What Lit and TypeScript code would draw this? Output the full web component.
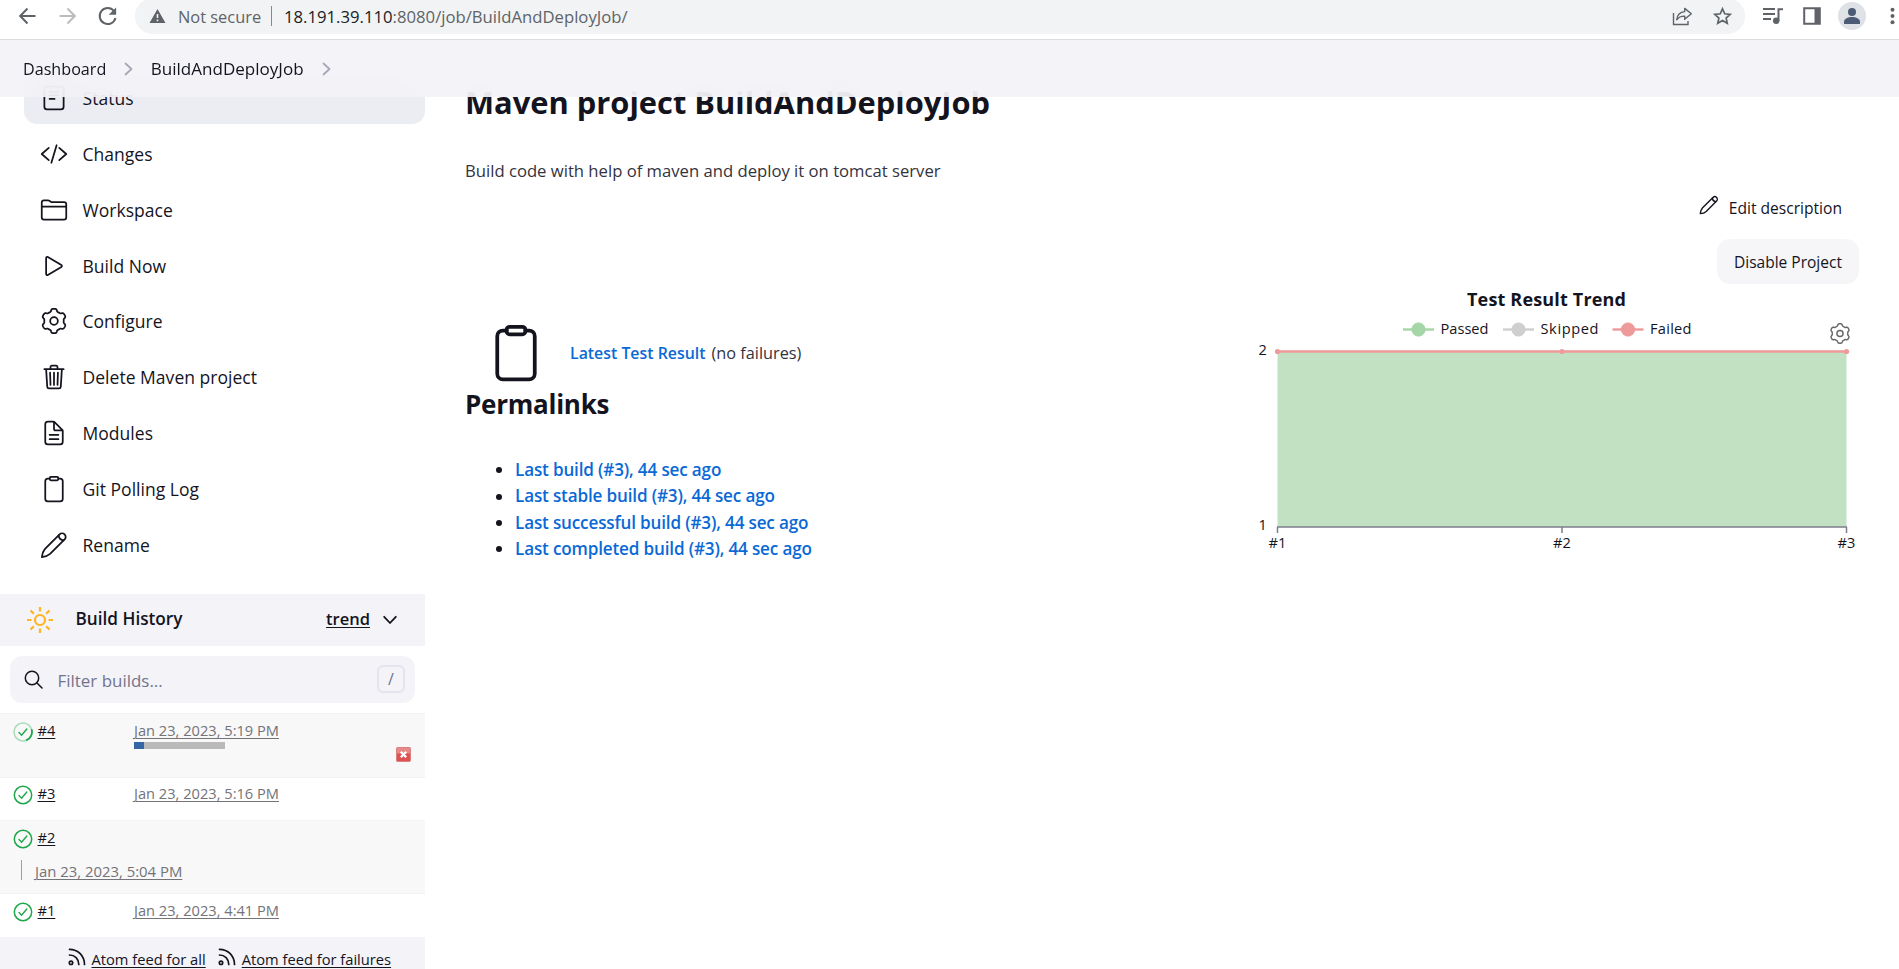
import { LitElement, html, svg, css } from "lit";
import { customElement } from "lit/decorators.js";
import { classMap } from "lit/directives/class-map.js";
import { styleMap } from "lit/directives/style-map.js";

/** Six-lobed cog outline centred on the origin, radius about 12. */
const cogPath = (() => {
  const points: string[] = [];
  for (let i = 0; i < 144; i++) {
    const a = (i / 144) * Math.PI * 2;
    const r = 10.55 + 1.25 * Math.tanh(-2.2 * Math.cos(6 * a));
    points.push(`${(r * Math.cos(a)).toFixed(2)} ${(r * Math.sin(a)).toFixed(2)}`);
  }
  return `M${points.join("L")}Z`;
})();

const clipboard = svg`
  <path d="M336 64h32a48 48 0 0148 48v320a48 48 0 01-48 48H144a48 48 0 01-48-48V112a48 48 0 0148-48h32" />
  <rect x="176" y="32" width="160" height="64" rx="26" />`;

const pencil = svg`
  <path d="M358 62L92 328C62 362 40 420 34 478c58-6 116-28 150-58L450 154c26-26 26-66 0-92s-66-26-92 0z" />
  <path d="M342 80c4 52 38 86 90 90" />`;

const glyphs = {
  status: svg`<rect x="80" y="48" width="352" height="416" rx="48" /><path d="M176 144h160M176 208h160M176 272h90" />`,
  changes: svg`<path d="M160 368L32 256l128-112M352 368l128-112-128-112M304 96l-96 320" />`,
  workspace: svg`<path d="M440 432H72a40 40 0 01-40-40V120a40 40 0 0140-40h75.89a40 40 0 0122.19 6.72l27.84 18.56a40 40 0 0022.19 6.72H440a40 40 0 0140 40v240a40 40 0 01-40 40zM32 192h448" />`,
  build: svg`<path d="M112 111v290c0 17.44 17 28.52 31 20.16l247.9-148.37c12.12-7.25 12.12-26.33 0-33.58L143 90.84c-14-8.36-31 2.72-31 20.16z" />`,
  configure: svg`<g transform="translate(256 256) scale(19)"><path d=${cogPath} stroke-width="1.7" /><circle r="3.7" stroke-width="1.7" /></g>`,
  delete: svg`<path d="M112 112l20 320c.95 18.49 14.4 32 32 32h184c17.67 0 30.87-13.51 32-32l20-320M80 112h352M192 112V72a23.93 23.93 0 0124-24h80a23.93 23.93 0 0124 24v40M256 176v224M184 176l8 224M328 176l-8 224" />`,
  modules: svg`<path d="M416 221.25V416a48 48 0 01-48 48H144a48 48 0 01-48-48V96a48 48 0 0148-48h98.75a32 32 0 0122.62 9.37l141.26 141.26a32 32 0 019.37 22.62z" /><path d="M256 56v120a32 32 0 0032 32h120M176 288h160M176 368h160" />`,
  log: clipboard,
  rename: pencil,
};

const menu: { icon: keyof typeof glyphs; label: string; active?: boolean }[] = [
  { icon: "status", label: "Status", active: true },
  { icon: "changes", label: "Changes" },
  { icon: "workspace", label: "Workspace" },
  { icon: "build", label: "Build Now" },
  { icon: "configure", label: "Configure" },
  { icon: "delete", label: "Delete Maven project" },
  { icon: "modules", label: "Modules" },
  { icon: "log", label: "Git Polling Log" },
  { icon: "rename", label: "Rename" },
];

const builds: { id: number; date: string; progress?: number; wrap?: boolean; compact?: boolean }[] = [
  { id: 4, date: "Jan 23, 2023, 5:19 PM", progress: 11 },
  { id: 3, date: "Jan 23, 2023, 5:16 PM", compact: true },
  { id: 2, date: "Jan 23, 2023, 5:04 PM", wrap: true },
  { id: 1, date: "Jan 23, 2023, 4:41 PM" },
];

const permalinks = ["Last build", "Last stable build", "Last successful build", "Last completed build"];

@customElement("browser-bar")
export class BrowserBar extends LitElement {
  static styles = css`
    :host { display: block; height: 39px; background: #fff; border-bottom: 1px solid #dadce0; color: #5f6368; }
    .bar { display: flex; align-items: center; height: 32px; padding-left: 16px; }
    svg { display: block; flex: none; fill: none; stroke: #5f6368; stroke-width: 2; }
    .fill { fill: #5f6368; stroke: none; }
    .back { margin-right: 16px; }
    .forward { margin-right: 16px; stroke: #babcbe; }
    .pill { flex: 1; display: flex; align-items: center; height: 36px; margin: 0 18px 0 15px; border-radius: 18px; background: #f1f3f4; }
    .warning { margin: 0 12px 0 14px; }
    .label { width: 83px; font-size: 16.4px; white-space: nowrap; }
    .divider { width: 1px; height: 20px; margin: 0 12px 0 10px; background: #85888c; }
    .url { flex: 1; font-size: 16.7px; white-space: nowrap; }
    .host { color: #202124; }
    .share { margin-right: 19px; }
    .star { margin-right: 12px; }
    .music { margin-right: 20px; }
    .panel { margin-right: 17px; }
    .avatar { display: block; margin-right: 24px; }
    .dots { margin-right: 4px; }
  `;
  render() {
    return html`
      <div class="bar">
        <svg class="back" width="24" height="24" viewBox="0 0 24 24"><path d="M19.5 12H4.5M11.5 4.5L4.2 12l7.3 7.5" /></svg>
        <svg class="forward" width="24" height="24" viewBox="0 0 24 24"><path d="M3.5 12h14.5M11.5 4.5l7.3 7.5-7.3 7.5" /></svg>
        <svg width="24" height="24" viewBox="0 0 24 24"><path d="M18 7A8 8 0 1 0 19.5 14" /><path class="fill" d="M20.1 3.5v7.2h-7.4z" /></svg>
        <div class="pill">
          <svg class="warning" width="17" height="16" viewBox="0 0 17 16"><path class="fill" fill-rule="evenodd" d="M8.5 1L16.5 15H.5zM7.7 6v4h1.6V6zM7.7 11.5v1.7h1.6v-1.7z" /></svg>
          <span class="label">Not secure</span>
          <span class="divider"></span>
          <span class="url"><span class="host">18.191.39.110</span>:8080/job/BuildAndDeployJob/</span>
          <svg class="share" width="21" height="20" viewBox="0 0 21 20"><path stroke-width="1.4" d="M1.5 7v11.5H16V15" /><path stroke-width="1.4" stroke-linejoin="round" d="M12.7 2.4l6.6 5.4-6.6 5.4v-3.1c-3.6-.1-6.2 1.2-8 3.7.5-4.6 3.2-7.8 8-8.2z" /></svg>
          <svg class="star" width="21" height="20" viewBox="0 0 21 20"><path stroke-width="1.7" d="M10.5 2.8l2.25 5 5.4.55-4.05 3.65 1.15 5.3-4.75-2.75-4.75 2.75 1.15-5.3L2.85 8.35l5.4-.55z" /></svg>
        </div>
        <svg class="music" width="20" height="18" viewBox="0 0 20 18"><path d="M0 2h12M0 7h12M0 12h8M15.5 14V2.2M14.5 2.2H20" /><circle class="fill" cx="13.2" cy="13.8" r="3.2" /></svg>
        <svg class="panel" width="18" height="18" viewBox="0 0 18 18"><path d="M1.2 1.2h15.6v15.6H1.2z" /><path class="fill" d="M11.5 1H17v16h-5.5z" /></svg>
        <svg class="avatar" width="28" height="28" viewBox="0 0 28 28"><circle cx="14" cy="14" r="14" fill="#dee1e6" stroke="none" /><g fill="#4d5b76" stroke="none"><circle cx="14" cy="10" r="4" /><path d="M6 22v-2.2c0-3 4-4.8 8-4.8s8 1.8 8 4.8V22z" /></g></svg>
        <svg class="dots" width="5" height="18" viewBox="0 0 5 18"><g class="fill"><circle cx="2.5" cy="2.7" r="2" /><circle cx="2.5" cy="9" r="2" /><circle cx="2.5" cy="15.3" r="2" /></g></svg>
      </div>
    `;
  }
}

@customElement("side-panel")
export class SidePanel extends LitElement {
  static styles = css`
    :host { display: block; width: 425px; flex: none; font-weight: 500; color: #14141f; }
    svg { display: block; flex: none; fill: none; }
    .menu { display: flex; flex-direction: column; gap: 3.85px; padding-left: 24px; }
    .item { display: flex; align-items: center; gap: 14.5px; height: 52px; padding-left: 16px; border-radius: 13px; font-size: 17.5px; letter-spacing: 0.03px; }
    .active { background: #ecedf3; }
    .item svg, .rss { stroke: #14141f; stroke-width: 32; stroke-linecap: round; stroke-linejoin: round; }
    .history { display: flex; align-items: center; height: 52px; margin-top: 23.2px; padding: 0 28px 0 26px; background: #f3f3f8; font-size: 17.2px; font-weight: 600; }
    .history span { flex: 1; padding: 0 0 3px 21.5px; }
    .trend { font-size: 16.5px; text-decoration: underline; text-underline-offset: 2px; padding-bottom: 3px; margin-right: 13px; }
    .filter { display: flex; align-items: center; box-sizing: border-box; height: 47px; margin: 10px; padding: 0 10px 0 14px; border-radius: 12px; background: #f3f3f8; color: #73738c; font-size: 16.95px; }
    .filter span { flex: 1; padding: 2px 0 0 14.5px; }
    .key { display: flex; align-items: center; justify-content: center; box-sizing: border-box; width: 28px; height: 28px; border: 2px solid #e4e3ee; border-radius: 6px; font-style: normal; font-size: 16px; margin-top: -1px; }
    .build { box-sizing: border-box; height: 44px; padding: 4px 14px 0 13px; border-top: 1px solid #f3f3f3; font-size: 14.65px; }
    .shaded { background: #f8f8f8; }
    .running { height: 64px; }
    .compact { height: 43px; padding-top: 3px; }
    .wrapped { height: 73px; }
    .line { display: flex; align-items: center; height: 24px; }
    .line svg { margin-top: 4px; }
    .num { width: 96.5px; padding-left: 4.5px; }
    .num span, .date, .feed span { text-decoration: underline; text-underline-offset: 2px; text-decoration-thickness: 1px; }
    .date { color: #737378; font-weight: 400; }
    .job { display: flex; padding-left: 121px; }
    .progress { width: 91px; height: 7px; background: #bababa; }
    .done { height: 7px; background: #3465a4; }
    .stop { margin: 5px 0 0 auto; }
    .below { margin: 11px 0 0 7.5px; height: 20px; padding-left: 13.5px; border-left: 1px solid #9a9fae; line-height: 22px; font-size: 14.88px; }
    .feeds { display: flex; gap: 12px; height: 32px; padding-left: 67.5px; background: #f3f3f8; font-size: 14.7px; }
    .feed { display: flex; gap: 6px; line-height: 20px; padding-top: 12px; height: 20px; }
    .rss { margin-top: -1px; stroke-width: 1.7; }
    .feed span { white-space: nowrap; line-height: 20px; }
  `;

  private statusIcon(running: boolean) {
    return html`<svg width="20" height="20" viewBox="0 0 20 20">
      ${running
        ? svg`<circle cx="10" cy="10" r="9" stroke="#a9dcb9" stroke-width="1.5" /><path d="M18.5 7.2A9 9 0 0 1 13.2 18.4" stroke="#1ea64b" stroke-width="1.8" />`
        : svg`<circle cx="10" cy="10" r="8.7" stroke="#1ea64b" stroke-width="1.5" />`}
      <path d="M6 10.6l2.6 2.6 5.2-6.2" stroke="#1ea64b" stroke-width="1.4" stroke-linecap="round" />
    </svg>`;
  }

  private feed(label: string) {
    return html`<div class="feed">
      <svg class="rss" width="18" height="18" viewBox="0 0 18 18">
        <path d="M1.5 1.3C10 1.3 16.5 8 16.5 16.5M1.5 7c5.3 0 9.3 4 9.3 9.5" /><circle cx="3" cy="14.8" r="1.7" />
      </svg><span>${label}</span></div>`;
  }

  render() {
    return html`
      <nav class="menu">
        ${menu.map((m) => html`<div class=${classMap({ item: true, active: !!m.active })}>
          <svg width="28" height="28" viewBox="0 0 512 512">${glyphs[m.icon]}</svg>${m.label}</div>`)}
      </nav>
      <div class="history">
        <svg width="28" height="28" viewBox="0 0 28 28" stroke="#ffb420" stroke-width="2.2">
          <circle cx="14" cy="14" r="5" />
          <path d="M14 1v4.5M14 22.5V27M1 14h4.5M22.5 14H27M4.5 4.5l3.3 3.3M20.2 20.2l3.3 3.3M4.5 23.5l3.3-3.3M20.2 7.8l3.3-3.3" />
        </svg>
        <span>Build History</span>
        <div class="trend">trend</div>
        <svg width="14" height="10" viewBox="0 0 14 10" stroke="#14141f" stroke-width="1.8" stroke-linecap="round" stroke-linejoin="round"><path d="M1.2 1.8L7 8l5.8-6.2" /></svg>
      </div>
      <div class="filter">
        <svg width="19" height="19" viewBox="0 0 19 19" stroke="#14141f" stroke-width="1.5" stroke-linecap="round"><circle cx="8" cy="8" r="6.7" /><path d="M13 13l5 5" /></svg>
        <span>Filter builds...</span><i class="key">/</i>
      </div>
      ${builds.map((b, i) => html`
        <div class=${classMap({ build: true, shaded: i % 2 === 0, running: b.progress !== undefined, compact: !!b.compact, wrapped: !!b.wrap })}>
          <div class="line">
            ${this.statusIcon(b.progress !== undefined)}
            <div class="num"><span>#${b.id}</span></div>
            ${b.wrap ? "" : html`<span class="date">${b.date}</span>`}
          </div>
          ${b.wrap ? html`<div class="below"><span class="date">${b.date}</span></div>` : ""}
          ${b.progress !== undefined ? html`<div class="job">
            <div class="progress"><div class="done" style=${styleMap({ width: `${b.progress}%` })}></div></div>
            <svg class="stop" width="15" height="15" viewBox="0 0 15 15">
              <rect x=".5" y=".5" width="14" height="14" rx="1" fill="#dd5252" stroke="#d98080" /><path d="M1 1h13v5.5H1z" fill="#e88989" />
              <path d="M4.8 4.8l5.4 5.4M10.2 4.8l-5.4 5.4" stroke="#fff" stroke-width="2.3" />
            </svg></div>` : ""}
        </div>`)}
      <div class="feeds">${this.feed("Atom feed for all")}${this.feed("Atom feed for failures")}</div>
    `;
  }
}

@customElement("trend-chart")
export class TrendChart extends LitElement {
  static styles = css`
    :host { display: block; }
    svg { display: block; fill: none; }
    text { fill: #14141f; font-size: 14.6px; }
    .title { font-size: 18px; font-weight: 700; }
    .axis { stroke: #7d7f8c; stroke-width: 1.5; }
    .failed { stroke: #ef9a9a; fill: #ef9a9a; }
    .passed { stroke: #a5d6a7; fill: #a5d6a7; }
    .skipped { stroke: #cfcfcf; fill: #cfcfcf; }
    .cog { stroke: #666; stroke-width: 1.7; }
  `;
  private legend = [
    { name: "Passed", cls: "passed", x: 1403, w: 48 },
    { name: "Skipped", cls: "skipped", x: 1503, w: 58 },
    { name: "Failed", cls: "failed", x: 1612.5, w: 41.5 },
  ];
  private runs = [1277.5, 1562, 1846.5];
  render() {
    return html`<svg width="619" height="280" viewBox="1240 284 619 280">
      <text class="title" x="1467" y="306" textLength="159">Test Result Trend</text>
      ${this.legend.map((l) => svg`<g class=${l.cls}><path d="M${l.x} 329.5h31" stroke-width="2.4" /><circle cx=${l.x + 15.5} cy="329.5" r="6.6" /></g>
        <text x=${l.x + 37.5} y="334" textLength=${l.w}>${l.name}</text>`)}
      <g class="cog" transform="translate(1840 333.5) scale(.83)"><path d=${cogPath} /><circle r="3.7" /></g>
      <path d="M1277.5 351.5h569V527h-569z" fill="#c2e1c2" />
      <path class="axis" d="M1277 527h570M1277.5 527v6M1562 527v6M1846.5 527v6" />
      <path d="M1277.5 351.5h569" stroke="#ef9a9a" stroke-width="2.6" />
      ${this.runs.map((x, i) => svg`<circle class="failed" stroke-width="0" cx=${x} cy="351.5" r="2.6" /><text x=${x} y="547.5" text-anchor="middle">#${i + 1}</text>`)}
      <text x="1258.5" y="355">2</text><text x="1258.5" y="530">1</text>
    </svg>`;
  }
}

@customElement("app-root")
export class AppRoot extends LitElement {
  static styles = css`
    :host { display: block; height: 969px; overflow: hidden; background: #fff; color: #14141f; font-family: "Open Sans", "Noto Sans", sans-serif; }
    svg { display: block; flex: none; fill: none; stroke: #14141f; stroke-width: 32; stroke-linecap: round; stroke-linejoin: round; }
    .crumbs { position: relative; z-index: 1; display: flex; align-items: center; height: 57px; padding-left: 23px; background: rgba(243, 243, 247, 0.88); backdrop-filter: blur(15px); font-weight: 500; font-size: 16.15px; }
    .crumbs svg { stroke: #a8a6b8; margin: 0 17.5px 0 18px; stroke-width: 1.8; }
    .job { font-size: 17.05px; }
    .page { display: flex; margin-top: -25px; }
    main { flex: 1; padding: 8px 40px 0 40px; }
    h1 { margin: 0; font-size: 30.85px; line-height: 44px; font-weight: 700; }
    .about { margin: 33.5px 0 0; font-size: 16.66px; line-height: 26px; color: #333340; }
    .edit { display: flex; justify-content: flex-end; align-items: center; gap: 10px; height: 30px; margin: 9.5px 17px 0 0; font-size: 15.6px; font-weight: 500; }
    .edit svg { margin-top: -6px; stroke-width: 36; }
    .disable { width: 142px; height: 45px; margin: 16px 0 0 auto; border-radius: 13px; background: #f6f6f9; font-size: 15.52px; font-weight: 500; line-height: 46.5px; text-align: center; }
    .columns { display: flex; justify-content: space-between; }
    .result { display: flex; align-items: center; height: 64px; margin-top: 36.5px; padding-left: 21px; font-size: 16.3px; }
    .result svg { margin-right: 24px; }
    .result a { font-size: 15.88px; font-weight: 600; margin-right: 6px; }
    a { color: #0a69d6; }
    .muted { color: #333340; }
    h2 { margin: 1.5px 0 35px; font-size: 26px; letter-spacing: -0.25px; line-height: 36px; font-weight: 700; }
    ul { margin: 0; padding-left: 31px; list-style: none; font-size: 17.1px; font-weight: 600; letter-spacing: -0.16px; line-height: 26.4px; }
    li { display: flex; align-items: center; gap: 13px; white-space: nowrap; }
    li::before { content: ""; width: 6px; height: 6px; border-radius: 50%; background: #14141f; }
  `;
  render() {
    const chevron = html`<svg width="9" height="14" viewBox="0 0 9 14"><path d="M1.5 1.5L7.5 7l-6 5.5" /></svg>`;
    return html`
      <browser-bar></browser-bar>
      <div class="crumbs"><span>Dashboard</span>${chevron}<span class="job">BuildAndDeployJob</span>${chevron}</div>
      <div class="page">
        <side-panel></side-panel>
        <main>
          <h1>Maven project BuildAndDeployJob</h1>
          <p class="about">Build code with help of maven and deploy it on tomcat server</p>
          <div class="edit"><svg width="20" height="20" viewBox="0 0 512 512">${pencil}</svg>Edit description</div>
          <div class="disable">Disable Project</div>
          <div class="columns">
            <section>
              <div class="result">
                <svg width="60" height="62" viewBox="0 0 512 512">${clipboard}</svg>
                <a>Latest Test Result</a><span class="muted">(no failures)</span>
              </div>
              <h2>Permalinks</h2>
              <ul>${permalinks.map((p) => html`<li><a>${p} (#3), 44 sec ago</a></li>`)}</ul>
            </section>
            <trend-chart></trend-chart>
          </div>
        </main>
      </div>
    `;
  }
}
